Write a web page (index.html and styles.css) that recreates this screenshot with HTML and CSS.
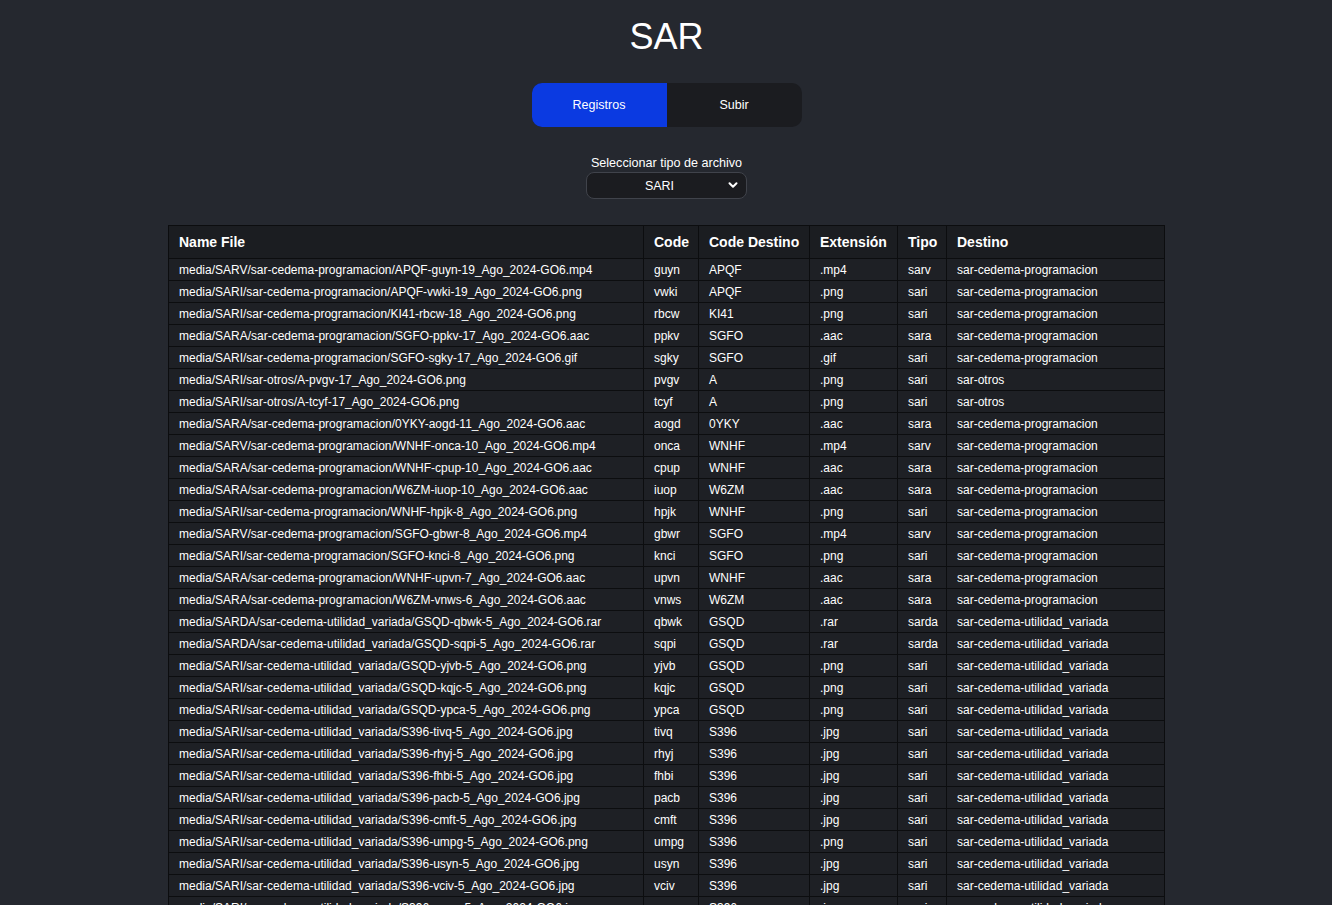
FILE: index.html
```html
<!DOCTYPE html>
<html lang="es">
<head>
<meta charset="utf-8">
<title>SAR</title>
<link rel="stylesheet" href="styles.css">
</head>
<body>
<div class="page">
  <h1 class="title">SAR</h1>
  <div class="tabs">
    <button class="tab tab-active">Registros</button>
    <button class="tab">Subir</button>
  </div>
  <div class="filter">
    <label class="filter-label" for="tipo">Seleccionar tipo de archivo</label>
    <div class="select-wrap">
      <select id="tipo" class="select">
        <option>SARI</option>
        <option>SARV</option>
        <option>SARA</option>
        <option>SARDA</option>
      </select>
      <svg class="chevron" viewBox="0 0 12 12" width="12" height="12"><path d="M2.5 4.2 6 7.7 9.5 4.2" fill="none" stroke="#ffffff" stroke-width="2" stroke-linecap="round" stroke-linejoin="round"/></svg>
    </div>
  </div>
  <table class="grid">
    <colgroup>
      <col class="c-name"><col class="c-code"><col class="c-dest"><col class="c-ext"><col class="c-tipo"><col class="c-destino">
    </colgroup>
    <thead>
      <tr><th>Name File</th><th>Code</th><th>Code Destino</th><th>Extensión</th><th>Tipo</th><th>Destino</th></tr>
    </thead>
    <tbody>
      <tr><td>media/SARV/sar-cedema-programacion/APQF-guyn-19_Ago_2024-GO6.mp4</td><td>guyn</td><td>APQF</td><td>.mp4</td><td>sarv</td><td>sar-cedema-programacion</td></tr>
      <tr><td>media/SARI/sar-cedema-programacion/APQF-vwki-19_Ago_2024-GO6.png</td><td>vwki</td><td>APQF</td><td>.png</td><td>sari</td><td>sar-cedema-programacion</td></tr>
      <tr><td>media/SARI/sar-cedema-programacion/KI41-rbcw-18_Ago_2024-GO6.png</td><td>rbcw</td><td>KI41</td><td>.png</td><td>sari</td><td>sar-cedema-programacion</td></tr>
      <tr><td>media/SARA/sar-cedema-programacion/SGFO-ppkv-17_Ago_2024-GO6.aac</td><td>ppkv</td><td>SGFO</td><td>.aac</td><td>sara</td><td>sar-cedema-programacion</td></tr>
      <tr><td>media/SARI/sar-cedema-programacion/SGFO-sgky-17_Ago_2024-GO6.gif</td><td>sgky</td><td>SGFO</td><td>.gif</td><td>sari</td><td>sar-cedema-programacion</td></tr>
      <tr><td>media/SARI/sar-otros/A-pvgv-17_Ago_2024-GO6.png</td><td>pvgv</td><td>A</td><td>.png</td><td>sari</td><td>sar-otros</td></tr>
      <tr><td>media/SARI/sar-otros/A-tcyf-17_Ago_2024-GO6.png</td><td>tcyf</td><td>A</td><td>.png</td><td>sari</td><td>sar-otros</td></tr>
      <tr><td>media/SARA/sar-cedema-programacion/0YKY-aogd-11_Ago_2024-GO6.aac</td><td>aogd</td><td>0YKY</td><td>.aac</td><td>sara</td><td>sar-cedema-programacion</td></tr>
      <tr><td>media/SARV/sar-cedema-programacion/WNHF-onca-10_Ago_2024-GO6.mp4</td><td>onca</td><td>WNHF</td><td>.mp4</td><td>sarv</td><td>sar-cedema-programacion</td></tr>
      <tr><td>media/SARA/sar-cedema-programacion/WNHF-cpup-10_Ago_2024-GO6.aac</td><td>cpup</td><td>WNHF</td><td>.aac</td><td>sara</td><td>sar-cedema-programacion</td></tr>
      <tr><td>media/SARA/sar-cedema-programacion/W6ZM-iuop-10_Ago_2024-GO6.aac</td><td>iuop</td><td>W6ZM</td><td>.aac</td><td>sara</td><td>sar-cedema-programacion</td></tr>
      <tr><td>media/SARI/sar-cedema-programacion/WNHF-hpjk-8_Ago_2024-GO6.png</td><td>hpjk</td><td>WNHF</td><td>.png</td><td>sari</td><td>sar-cedema-programacion</td></tr>
      <tr><td>media/SARV/sar-cedema-programacion/SGFO-gbwr-8_Ago_2024-GO6.mp4</td><td>gbwr</td><td>SGFO</td><td>.mp4</td><td>sarv</td><td>sar-cedema-programacion</td></tr>
      <tr><td>media/SARI/sar-cedema-programacion/SGFO-knci-8_Ago_2024-GO6.png</td><td>knci</td><td>SGFO</td><td>.png</td><td>sari</td><td>sar-cedema-programacion</td></tr>
      <tr><td>media/SARA/sar-cedema-programacion/WNHF-upvn-7_Ago_2024-GO6.aac</td><td>upvn</td><td>WNHF</td><td>.aac</td><td>sara</td><td>sar-cedema-programacion</td></tr>
      <tr><td>media/SARA/sar-cedema-programacion/W6ZM-vnws-6_Ago_2024-GO6.aac</td><td>vnws</td><td>W6ZM</td><td>.aac</td><td>sara</td><td>sar-cedema-programacion</td></tr>
      <tr><td>media/SARDA/sar-cedema-utilidad_variada/GSQD-qbwk-5_Ago_2024-GO6.rar</td><td>qbwk</td><td>GSQD</td><td>.rar</td><td>sarda</td><td>sar-cedema-utilidad_variada</td></tr>
      <tr><td>media/SARDA/sar-cedema-utilidad_variada/GSQD-sqpi-5_Ago_2024-GO6.rar</td><td>sqpi</td><td>GSQD</td><td>.rar</td><td>sarda</td><td>sar-cedema-utilidad_variada</td></tr>
      <tr><td>media/SARI/sar-cedema-utilidad_variada/GSQD-yjvb-5_Ago_2024-GO6.png</td><td>yjvb</td><td>GSQD</td><td>.png</td><td>sari</td><td>sar-cedema-utilidad_variada</td></tr>
      <tr><td>media/SARI/sar-cedema-utilidad_variada/GSQD-kqjc-5_Ago_2024-GO6.png</td><td>kqjc</td><td>GSQD</td><td>.png</td><td>sari</td><td>sar-cedema-utilidad_variada</td></tr>
      <tr><td>media/SARI/sar-cedema-utilidad_variada/GSQD-ypca-5_Ago_2024-GO6.png</td><td>ypca</td><td>GSQD</td><td>.png</td><td>sari</td><td>sar-cedema-utilidad_variada</td></tr>
      <tr><td>media/SARI/sar-cedema-utilidad_variada/S396-tivq-5_Ago_2024-GO6.jpg</td><td>tivq</td><td>S396</td><td>.jpg</td><td>sari</td><td>sar-cedema-utilidad_variada</td></tr>
      <tr><td>media/SARI/sar-cedema-utilidad_variada/S396-rhyj-5_Ago_2024-GO6.jpg</td><td>rhyj</td><td>S396</td><td>.jpg</td><td>sari</td><td>sar-cedema-utilidad_variada</td></tr>
      <tr><td>media/SARI/sar-cedema-utilidad_variada/S396-fhbi-5_Ago_2024-GO6.jpg</td><td>fhbi</td><td>S396</td><td>.jpg</td><td>sari</td><td>sar-cedema-utilidad_variada</td></tr>
      <tr><td>media/SARI/sar-cedema-utilidad_variada/S396-pacb-5_Ago_2024-GO6.jpg</td><td>pacb</td><td>S396</td><td>.jpg</td><td>sari</td><td>sar-cedema-utilidad_variada</td></tr>
      <tr><td>media/SARI/sar-cedema-utilidad_variada/S396-cmft-5_Ago_2024-GO6.jpg</td><td>cmft</td><td>S396</td><td>.jpg</td><td>sari</td><td>sar-cedema-utilidad_variada</td></tr>
      <tr><td>media/SARI/sar-cedema-utilidad_variada/S396-umpg-5_Ago_2024-GO6.png</td><td>umpg</td><td>S396</td><td>.png</td><td>sari</td><td>sar-cedema-utilidad_variada</td></tr>
      <tr><td>media/SARI/sar-cedema-utilidad_variada/S396-usyn-5_Ago_2024-GO6.jpg</td><td>usyn</td><td>S396</td><td>.jpg</td><td>sari</td><td>sar-cedema-utilidad_variada</td></tr>
      <tr><td>media/SARI/sar-cedema-utilidad_variada/S396-vciv-5_Ago_2024-GO6.jpg</td><td>vciv</td><td>S396</td><td>.jpg</td><td>sari</td><td>sar-cedema-utilidad_variada</td></tr>
      <tr><td>media/SARI/sar-cedema-utilidad_variada/S396-wsxo-5_Ago_2024-GO6.jpg</td><td>wsxo</td><td>S396</td><td>.jpg</td><td>sari</td><td>sar-cedema-utilidad_variada</td></tr>
      <tr><td>media/SARI/sar-cedema-utilidad_variada/S396-dkle-5_Ago_2024-GO6.jpg</td><td>dkle</td><td>S396</td><td>.jpg</td><td>sari</td><td>sar-cedema-utilidad_variada</td></tr>
    </tbody>
  </table>
</div>
</body>
</html>
```

FILE: styles.css
```css
html, body {
  margin: 0;
  padding: 0;
  background: #25282f;
  color: #ffffff;
  font-family: "Liberation Sans", Arial, sans-serif;
}

.page {
  display: flex;
  flex-direction: column;
  align-items: center;
  padding-top: 16px;
  padding-left: 1px;
}

.title {
  margin: 0;
  font-size: 36px;
  font-weight: 400;
  line-height: 41px;
}

.tabs {
  display: flex;
  margin-top: 26px;
  width: 270px;
  height: 44px;
  border-radius: 10px;
  overflow: hidden;
  background: #1b1c20;
}

.tab {
  flex: 1;
  border: none;
  background: transparent;
  color: #ffffff;
  font-family: inherit;
  font-size: 12.5px;
  cursor: pointer;
  padding: 0;
}

.tab-active {
  background: #0b3ae1;
}

.filter {
  display: flex;
  flex-direction: column;
  align-items: center;
  margin-top: 29px;
}

.filter-label {
  font-size: 12.6px;
  line-height: 15px;
}

.select-wrap {
  position: relative;
  margin-top: 1px;
  width: 161px;
  height: 27px;
}

.select {
  appearance: none;
  -webkit-appearance: none;
  width: 100%;
  height: 100%;
  box-sizing: border-box;
  background: #1b1c20;
  color: #ffffff;
  border: 1px solid #40434b;
  border-radius: 8px;
  font-family: inherit;
  font-size: 12.5px;
  text-align: center;
  text-align-last: center;
  padding: 0 22px 0 8px;
}

.chevron {
  position: absolute;
  right: 8px;
  top: 7px;
  pointer-events: none;
}

.grid {
  margin-top: 26px;
  width: 996px;
  table-layout: fixed;
  border-collapse: collapse;
  background: #1e2025;
  border: 1px solid #0c0d0f;
}

.c-name { width: 475px; }
.c-code { width: 55px; }
.c-dest { width: 111px; }
.c-ext { width: 88px; }
.c-tipo { width: 49px; }
.c-destino { width: 218px; }

.grid th,
.grid td {
  border: 1px solid #0c0d0f;
  text-align: left;
  white-space: nowrap;
  overflow: hidden;
  padding: 0 10px;
}

.grid th {
  font-size: 14px;
  font-weight: 700;
  height: 32px;
  background: #1b1d21;
}

.grid td {
  font-size: 12px;
  height: 21px;
  line-height: 14px;
}
```
